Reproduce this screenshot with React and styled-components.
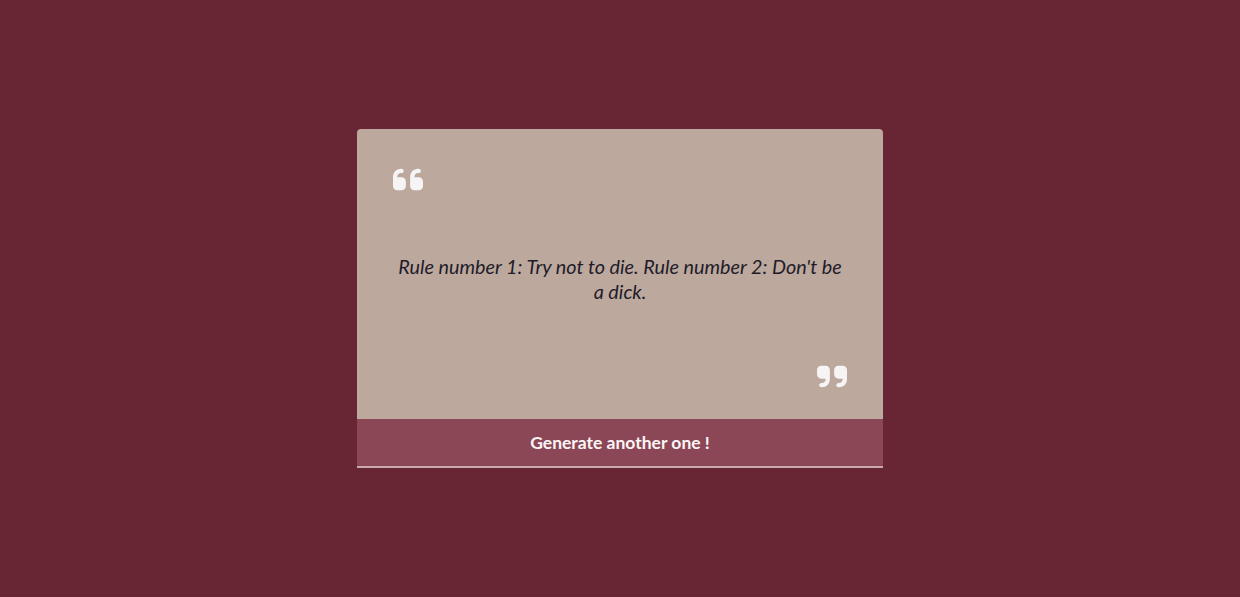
import styled, { createGlobalStyle } from "styled-components";

const GlobalStyle = createGlobalStyle`
	* {
		box-sizing: border-box;
	}

	body {
		margin: 0;
		background: #682534;
		font-family: Lato, "Liberation Sans", sans-serif;
	}
`;

const Page = styled.div`
	min-height: 100vh;
	display: flex;
	align-items: center;
	justify-content: center;
`;

const Card = styled.div`
	width: 526px;
	background: #bda89e;
	border-radius: 4px 4px 0 0;
	border-bottom: 2px solid #c9aaa6;
	display: flex;
	flex-direction: column;
`;

const Body = styled.div`
	display: flex;
	flex-direction: column;
	padding: 39px 36px 31px;
	color: #f6f4f4;
`;

const Mark = styled.div`
	display: flex;
	justify-content: ${({ $end }) => ($end ? "flex-end" : "flex-start")};
	line-height: 0;

	svg {
		width: 30px;
		height: 23px;
		fill: currentColor;
	}
`;

const Text = styled.p`
	margin: 63px 4px 61px;
	text-align: center;
	font-style: italic;
	font-size: 19.8px;
	line-height: 25px;
	color: #1e1c29;
`;

const Button = styled.button`
	height: 47px;
	border: none;
	background: #8b4756;
	color: #fbf5f6;
	font-family: inherit;
	font-weight: 700;
	font-size: 17.5px;
	cursor: pointer;
`;

const QuoteLeft = () => (
	<svg viewBox="0 96 448 320">
		<path d="M0 216C0 149.7 53.7 96 120 96h8c17.7 0 32 14.3 32 32s-14.3 32-32 32h-8c-30.9 0-56 25.1-56 56v8h64c35.3 0 64 28.7 64 64v64c0 35.3-28.7 64-64 64H64c-35.3 0-64-28.7-64-64V216zm256 0c0-66.3 53.7-120 120-120h8c17.7 0 32 14.3 32 32s-14.3 32-32 32h-8c-30.9 0-56 25.1-56 56v8h64c35.3 0 64 28.7 64 64v64c0 35.3-28.7 64-64 64H320c-35.3 0-64-28.7-64-64V216z" />
	</svg>
);

const QuoteRight = () => (
	<svg viewBox="0 96 448 320">
		<path d="M448 296c0 66.3-53.7 120-120 120h-8c-17.7 0-32-14.3-32-32s14.3-32 32-32h8c30.9 0 56-25.1 56-56v-8H320c-35.3 0-64-28.7-64-64V160c0-35.3 28.7-64 64-64h64c35.3 0 64 28.7 64 64v136zm-256 0c0 66.3-53.7 120-120 120h-8c-17.7 0-32-14.3-32-32s14.3-32 32-32h8c30.9 0 56-25.1 56-56v-8H64c-35.3 0-64-28.7-64-64V160c0-35.3 28.7-64 64-64h64c35.3 0 64 28.7 64 64v136z" />
	</svg>
);

export default function App() {
	return (
		<>
			<GlobalStyle />
			<Page>
				<Card>
					<Body>
						<Mark>
							<QuoteLeft />
						</Mark>
						<Text>
							Rule number 1: Try not to die. Rule number 2: Don't be a
							dick.
						</Text>
						<Mark $end>
							<QuoteRight />
						</Mark>
					</Body>
					<Button>Generate another one !</Button>
				</Card>
			</Page>
		</>
	);
}
